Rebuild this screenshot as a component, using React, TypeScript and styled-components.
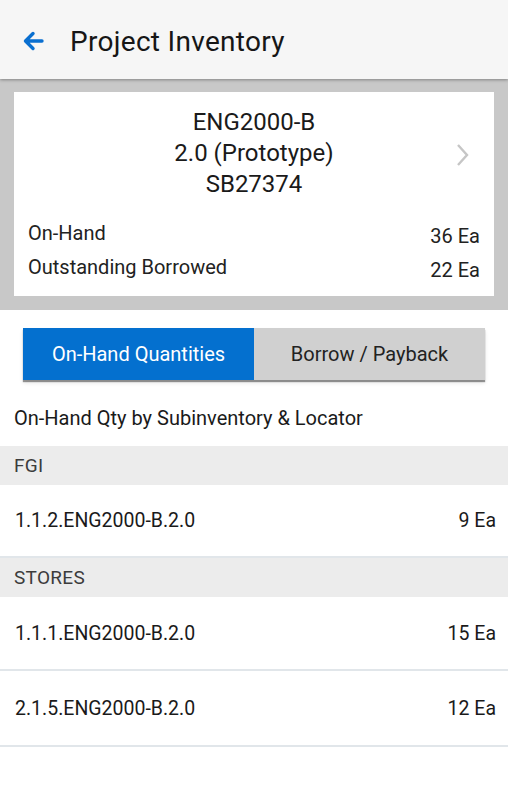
import React from 'react'
import styled, { createGlobalStyle } from 'styled-components'

const GlobalStyle = createGlobalStyle`
  html, body {
    margin: 0;
    padding: 0;
    background: #fff;
    font-family: Roboto, "Liberation Sans", sans-serif;
    color: #1c1c1c;
  }
`

const Header = styled.header`
  position: relative;
  z-index: 1;
  display: flex;
  align-items: center;
  height: 79px;
  background: #f6f6f6;
  box-shadow: 0 1px 3px rgba(0, 0, 0, 0.35);
`

const BackButton = styled.button`
  display: flex;
  align-items: center;
  justify-content: center;
  width: 44px;
  height: 44px;
  margin: 3px 0 0 11px;
  padding: 0;
  border: 0;
  background: none;
`

const Title = styled.h1`
  margin: 3px 0 0 15px;
  font-size: 28px;
  font-weight: 400;
  letter-spacing: 0.3px;
  color: #161616;
`

const Summary = styled.section`
  background: #c8c8c8;
  padding: 13px 14px 14px;
`

const Card = styled.div`
  background: #fff;
  padding: 15px 14px 12px;
`

const ItemHeading = styled.div`
  position: relative;
  text-align: center;
  font-size: 24px;
  line-height: 31px;
  color: #1a1a1a;
`

const Chevron = styled.svg`
  position: absolute;
  right: 10px;
  top: 36px;
`

const Stats = styled.div`
  margin-top: 16px;
`

const Stat = styled.div`
  display: flex;
  justify-content: space-between;
  align-items: flex-start;
  height: 34px;
  font-size: 20px;
  line-height: 34px;
  color: #222;
`

const StatValue = styled.span`
  line-height: 40px;
`

const Tabs = styled.div`
  display: flex;
  margin: 18px 23px 0;
  height: 52px;
  box-shadow: 0 2px 1px rgba(0, 0, 0, 0.4), 0 3px 4px rgba(0, 0, 0, 0.1);
`

const Tab = styled.button<{ $active?: boolean }>`
  flex: 1;
  border: 0;
  padding: 0;
  font-family: inherit;
  font-size: 20px;
  color: ${p => (p.$active ? '#fff' : '#222')};
  background: ${p => (p.$active ? '#0470cf' : '#d0d0d0')};
`

const Caption = styled.p`
  margin: 0;
  padding: 27px 14px 16px;
  font-size: 20px;
  line-height: 23px;
  color: #1a1a1a;
`

const GroupLabel = styled.div`
  height: 39px;
  display: flex;
  align-items: center;
  padding: 0 14px;
  background: #ececec;
  font-size: 19px;
  letter-spacing: 0.3px;
  color: #3c3c3c;
`

const Row = styled.div<{ $height: number }>`
  display: flex;
  align-items: center;
  justify-content: space-between;
  height: ${p => p.$height}px;
  padding: 0 12px 0 15px;
  border-bottom: 2px solid #e1e6ea;
  font-size: 19.5px;
  color: #1a1a1a;
`

const groups = [
  {
    name: 'FGI',
    rows: [{ locator: '1.1.2.ENG2000-B.2.0', qty: '9 Ea', height: 71 }],
  },
  {
    name: 'STORES',
    rows: [
      { locator: '1.1.1.ENG2000-B.2.0', qty: '15 Ea', height: 72 },
      { locator: '2.1.5.ENG2000-B.2.0', qty: '12 Ea', height: 74 },
    ],
  },
]

const App: React.FC = () => (
  <>
    <GlobalStyle />
    <Header>
      <BackButton aria-label="Back">
        <svg width="24" height="24" viewBox="0 0 24 24">
          <path
            d="M21 12H5M12 4.5L4.5 12l7.5 7.5"
            fill="none"
            stroke="#0a6fd0"
            strokeWidth="3.4"
            strokeLinecap="round"
            strokeLinejoin="round"
          />
        </svg>
      </BackButton>
      <Title>Project Inventory</Title>
    </Header>

    <Summary>
      <Card>
        <ItemHeading>
          <div>ENG2000-B</div>
          <div>2.0 (Prototype)</div>
          <div>SB27374</div>
          <Chevron width="14" height="24" viewBox="0 0 14 24">
            <path d="M2 2l9 10-9 10" fill="none" stroke="#c6c6c6" strokeWidth="2.4" />
          </Chevron>
        </ItemHeading>
        <Stats>
          <Stat>
            <span>On-Hand</span>
            <StatValue>36 Ea</StatValue>
          </Stat>
          <Stat>
            <span>Outstanding Borrowed</span>
            <StatValue>22 Ea</StatValue>
          </Stat>
        </Stats>
      </Card>
    </Summary>

    <Tabs>
      <Tab $active>On-Hand Quantities</Tab>
      <Tab>Borrow / Payback</Tab>
    </Tabs>

    <Caption>On-Hand Qty by Subinventory &amp; Locator</Caption>

    {groups.map(g => (
      <div key={g.name}>
        <GroupLabel>{g.name}</GroupLabel>
        {g.rows.map(r => (
          <Row key={r.locator} $height={r.height}>
            <span>{r.locator}</span>
            <span>{r.qty}</span>
          </Row>
        ))}
      </div>
    ))}
  </>
)

export default App
